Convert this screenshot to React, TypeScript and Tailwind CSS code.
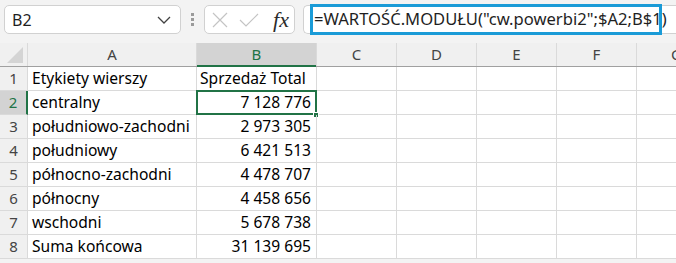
import React from 'react'

const rows: [string, string][] = [
  ['Etykiety wierszy', 'Sprzedaż Total'],
  ['centralny', '7 128 776'],
  ['południowo-zachodni', '2 973 305'],
  ['południowy', '6 421 513'],
  ['północno-zachodni', '4 478 707'],
  ['północny', '4 458 656'],
  ['wschodni', '5 678 738'],
  ['Suma końcowa', '31 139 695'],
]

const cols = ['C', 'D', 'E', 'F', 'G']

export default function App() {
  return (
    <div className="w-[676px] h-[263px] overflow-hidden bg-[#f3f3f3] font-['Noto_Sans',sans-serif] text-[#1f1f1f]">
      {/* Formula bar */}
      <div className="flex items-center h-[43px] pt-[5px] pb-[9px] pl-1">
        <div className="flex items-center justify-between w-[177px] h-[29px] bg-white border border-[#d1d1d1] rounded-[5px] pl-[7px] pr-[9px]">
          <span className="text-[16px]">B2</span>
          <svg width="14" height="8" viewBox="0 0 14 8" fill="none" stroke="#424242" strokeWidth="1.3">
            <path d="M1 1l6 6 6-6" />
          </svg>
        </div>
        <div className="flex flex-col gap-[2px] mx-[10px]">
          <div className="w-[3px] h-[3px] bg-[#9a9a9a]" />
          <div className="w-[3px] h-[3px] bg-[#9a9a9a]" />
          <div className="w-[3px] h-[3px] bg-[#9a9a9a]" />
        </div>
        <div className="flex items-center w-[91px] h-[29px] bg-white border border-[#d1d1d1] rounded-[5px] pl-[7px] pr-[5px]">
          <svg width="16" height="16" viewBox="0 0 16 16" fill="none" stroke="#c4c4c4" strokeWidth="1.2">
            <path d="M1 1l14 14M15 1L1 15" />
          </svg>
          <svg className="ml-[11px]" width="20" height="14" viewBox="0 0 20 14" fill="none" stroke="#c4c4c4" strokeWidth="1.2">
            <path d="M1 7l6 6L19 1" />
          </svg>
          <span className="ml-auto font-['Liberation_Serif',serif] italic text-[22px] leading-none text-[#2b2b2b]">fx</span>
        </div>
        <div className="flex-1 ml-2 h-[29px] bg-white border border-[#d1d1d1] rounded-l-[5px] border-r-0 flex items-center">
          <div className="ml-[6px] w-[352px] h-[31px] border-[3px] border-[#1a9bd7] flex items-center pl-[1px]">
            <span className="text-[16.6px] whitespace-nowrap text-[#1f1f1f]">=WARTOŚĆ.MODUŁU("cw.powerbi2";$A2;B$1)</span>
          </div>
        </div>
      </div>

      {/* Column headers */}
      <div className="flex h-[24px] bg-[#f0f0f0] border-b border-[#a0a0a0] text-[15px] text-[#444]">
        <div className="w-[28px] shrink-0 border-r border-[#dadada] relative">
          <svg className="absolute right-[4px] bottom-[3px]" width="16" height="16" viewBox="0 0 16 16">
            <path d="M16 0L16 16L0 16Z" fill="#d4d4d4" />
          </svg>
        </div>
        <div className="w-[169px] shrink-0 border-r border-[#dadada] flex items-center justify-center">A</div>
        <div className="w-[120px] shrink-0 border-r border-[#dadada] bg-[#d3d3d3] text-[#217346] flex items-center justify-center relative">
          B
          <div className="absolute left-0 right-0 -bottom-[1px] h-[2px] bg-[#217346]" />
        </div>
        {cols.map((c) => (
          <div key={c} className="w-[80px] shrink-0 border-r border-[#dadada] flex items-center justify-center">{c}</div>
        ))}
      </div>

      {/* Grid rows */}
      {rows.map(([a, b], i) => {
        const sel = i === 1
        return (
          <div key={i} className="flex h-[24px] bg-white text-[15.6px] text-black">
            <div className={`w-[28px] shrink-0 flex items-center justify-center border-b border-[#dadada] text-[15px] ${sel ? 'bg-[#d3d3d3] text-[#217346] border-r-2 border-r-[#217346]' : 'bg-[#f0f0f0] text-[#444] border-r border-r-[#dadada]'}`}>{i + 1}</div>
            <div className="w-[169px] shrink-0 border-r border-b border-[#dadada] flex items-center pl-[4px] whitespace-nowrap">{a}</div>
            <div className={`w-[120px] shrink-0 border-b border-r border-[#dadada] flex items-center justify-end pr-[5px] whitespace-nowrap relative ${i === 0 ? 'justify-start pl-[3px]' : ''}`}>
              {b}
              {sel && (
                <>
                  <div className="absolute -left-[1px] -top-[1px] -right-[1px] -bottom-[1px] border-2 border-[#217346]" />
                  <div className="absolute -right-[3px] -bottom-[4px] w-[6px] h-[6px] bg-[#217346] border border-white" />
                </>
              )}
            </div>
            {cols.map((c) => (
              <div key={c} className="w-[80px] shrink-0 border-r border-b border-[#dadada]" />
            ))}
          </div>
        )
      })}
    </div>
  )
}
